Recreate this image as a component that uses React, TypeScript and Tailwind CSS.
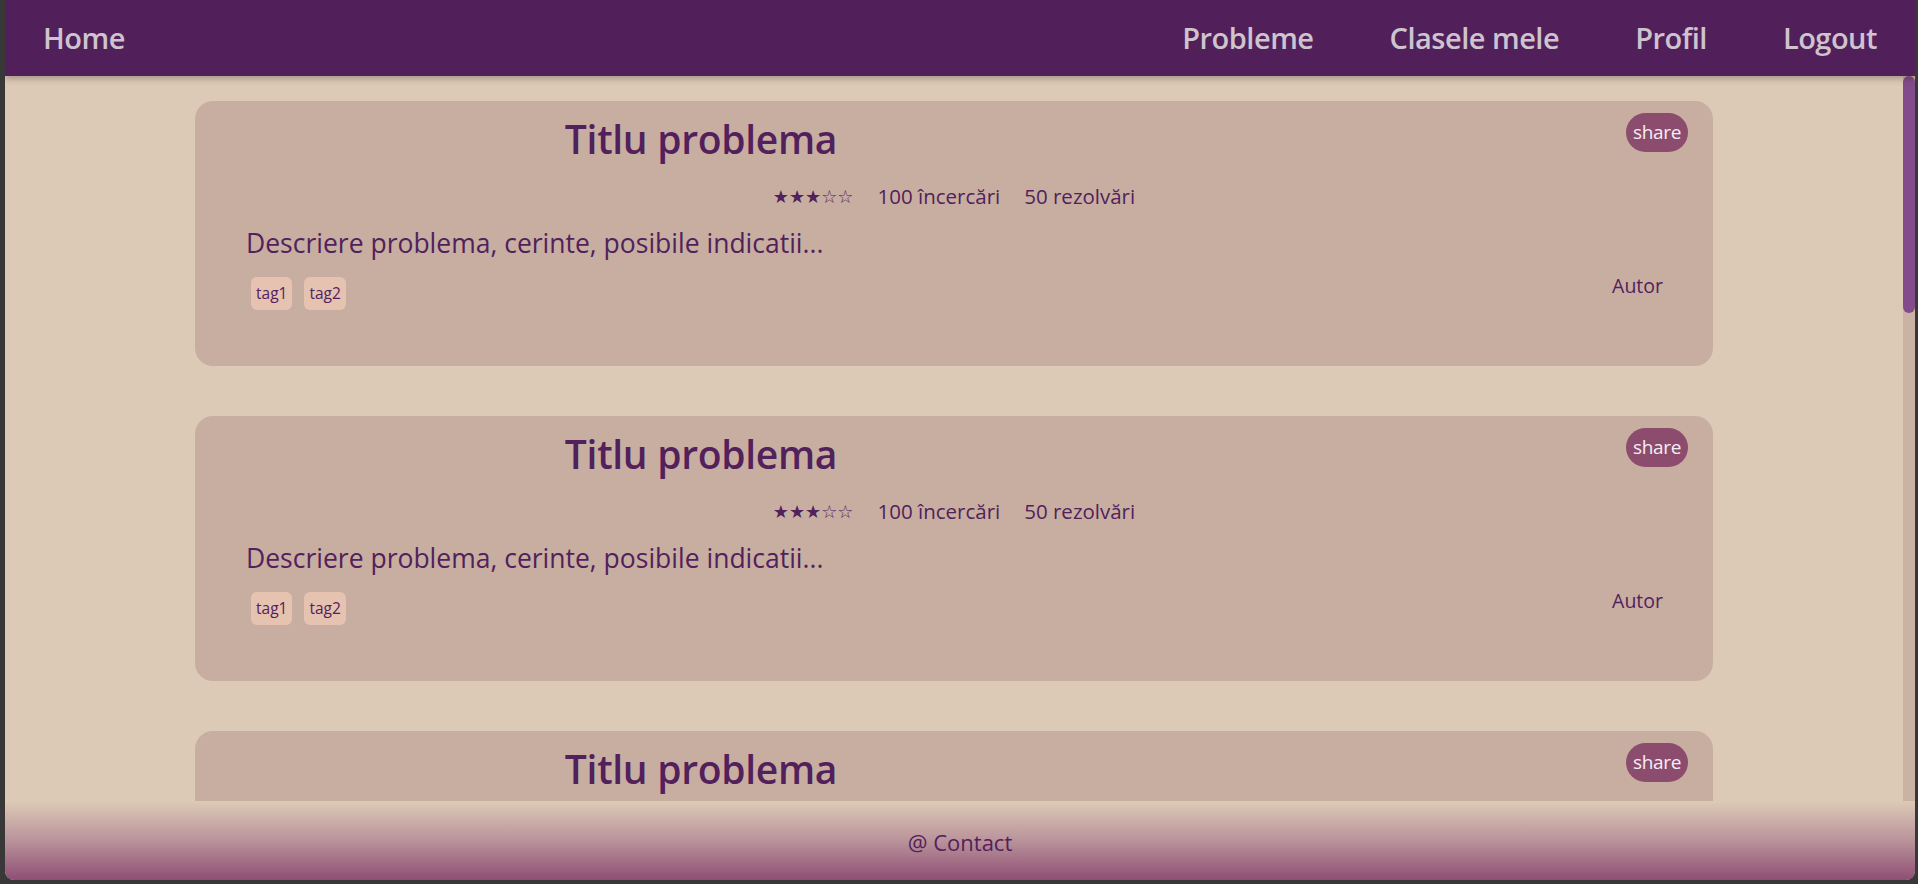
import React from "react";

const FONT = { fontFamily: '"Open Sans", "Noto Sans", sans-serif' };

function Card() {
  return (
    <div className="relative bg-[#c8aea1] rounded-[18px] pt-[16px] pb-[56px] text-[#52215b]">
      <button className="absolute top-[12px] right-[25px] h-[39px] w-[62px] rounded-full bg-[#8c4c6e] text-[#f7eef4] text-[19px] leading-none tracking-[-0.3px]">
        share
      </button>
      <div className="w-[1012px] text-center h-[44px] text-[39px] leading-[44px] font-semibold tracking-[-0.3px]">
        Titlu problema
      </div>
      <div className="mt-[22px] h-[27px] flex justify-center items-center gap-[24px] text-[20.5px] leading-[27px]">
        <span className="text-[18px]" style={{ fontFamily: '"DejaVu Sans", sans-serif' }}>★★★☆☆</span>
        <span>100 încercări</span>
        <span>50 rezolvări</span>
      </div>
      <div className="mt-[15px] h-[36px] pl-[51px] text-[26.5px] leading-[36px]">
        Descriere problema, cerinte, posibile indicatii...
      </div>
      <div className="mt-[16px] flex items-center justify-between pl-[56px] pr-[50px]">
        <div className="flex gap-[12px]">
          <span className="h-[33px] px-[5px] flex items-center rounded-[6px] bg-[#e6c2b1] text-[15.5px]">tag1</span>
          <span className="h-[33px] px-[5px] flex items-center rounded-[6px] bg-[#e6c2b1] text-[15.5px]">tag2</span>
        </div>
        <span className="text-[19.5px] leading-none -mt-[15px]">Autor</span>
      </div>
    </div>
  );
}

export default function App() {
  return (
    <div className="w-[1918px] h-[884px] bg-[#383838] pl-[5px] pr-[3px] pb-[4px]" style={FONT}>
      <div className="h-full flex flex-col rounded-b-[9px] overflow-hidden bg-[#ddcab6]">
        <nav className="relative z-10 h-[76px] shrink-0 bg-[#51205a] flex items-center justify-between px-[38px] text-[#cec4ce] text-[29px] font-semibold shadow-[0_3px_6px_rgba(60,30,40,0.3)]">
          <span className="tracking-[-0.5px]">Home</span>
          <div className="flex gap-[76px] tracking-[-0.5px]">
            <span>Probleme</span>
            <span>Clasele mele</span>
            <span>Profil</span>
            <span>Logout</span>
          </div>
        </nav>
        <div className="flex-1 min-h-0 flex">
          <div className="flex-1 min-w-0 overflow-hidden">
            <div className="w-[1518px] mx-auto pt-[25px] pb-[40px] flex flex-col gap-[50px]">
              <Card />
              <Card />
              <Card />
              <Card />
              <Card />
              <Card />
              <Card />
            </div>
          </div>
          <div className="w-[12px] shrink-0 bg-[#cbb3a3]">
            <div className="h-[237px] w-full rounded-full bg-[#834b8b]"></div>
          </div>
        </div>
        <footer className="h-[79px] shrink-0 bg-linear-to-b from-[#ddcab6] via-[#b9939a] to-[#8e4e74] flex items-center justify-center text-[#52215b] text-[22px] pt-[3px]">
          @ Contact
        </footer>
      </div>
    </div>
  );
}
